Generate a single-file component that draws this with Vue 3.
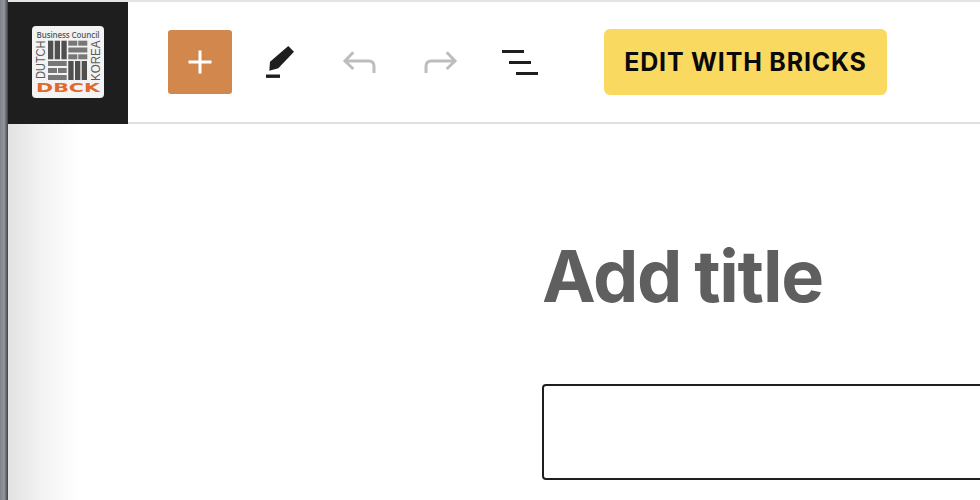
<template>
  <div class="page">
    <div class="edge"></div>
    <div class="main">
      <header class="toolbar">
        <a class="site-logo">
          <svg class="logo-img" viewBox="0 0 72 72" width="72" height="72">
            <rect width="72" height="72" rx="4" fill="#f3f3f3" />
            <text x="4.5" y="12.300" class="l-top" textLength="63" lengthAdjust="spacing">Business Council</text>
            <text transform="translate(13 53) rotate(-90)" class="l-side" textLength="38.500" lengthAdjust="spacingAndGlyphs">DUTCH</text>
            <text transform="translate(68 55) rotate(-90)" class="l-side" textLength="40.500" lengthAdjust="spacingAndGlyphs">KOREA</text>
            <rect
              v-for="b in bars"
              :key="b.x + '-' + b.y"
              :x="b.x"
              :y="b.y"
              :width="b.w"
              :height="b.h"
              :fill="b.fill"
            />
            <text x="4" y="65.800" class="l-name" textLength="64" lengthAdjust="spacingAndGlyphs">DBCK</text>
          </svg>
        </a>
        <div class="tools">
          <button class="add-btn">
            <svg width="24" height="24" viewBox="0 0 24 24"><path d="M12 0.500v23M0.500 12h23" stroke="#fff" stroke-width="3" fill="none" /></svg>
          </button>
          <button class="icon-btn">
            <svg width="36" height="36" viewBox="0 0 36 36">
              <path d="M26.300 2 32 7.700 16.300 24.300 7.300 26.700 8 17.700Z" fill="#1e1e1e" />
              <path d="M4 32.200h14" stroke="#1e1e1e" stroke-width="3.400" />
            </svg>
          </button>
          <button class="icon-btn">
            <svg width="36" height="36" viewBox="0 0 36 36" fill="none" stroke="#bdbdbd" stroke-width="3">
              <path d="M32 29v-7c0-3-2-5-5-5H4" />
              <path d="M11.300 8.300 3 17l8.300 8" />
            </svg>
          </button>
          <button class="icon-btn">
            <svg width="36" height="36" viewBox="0 0 36 36" fill="none" stroke="#bdbdbd" stroke-width="3">
              <path d="M4 29v-7c0-3 2-5 5-5h23" />
              <path d="M24.700 8.300 33 17l-8.300 8" />
            </svg>
          </button>
          <button class="icon-btn">
            <svg width="36" height="36" viewBox="0 0 36 36" fill="#1e1e1e">
              <rect x="0" y="6" width="22" height="3" />
              <rect x="7" y="17" width="22" height="3" />
              <rect x="14" y="28" width="22" height="3" />
            </svg>
          </button>
          <button class="bricks-btn">EDIT WITH BRICKS</button>
        </div>
      </header>
      <div class="editor">
        <div class="canvas">
          <h1 class="post-title">Add title</h1>
          <div class="block"></div>
        </div>
      </div>
    </div>
  </div>
</template>

<script setup>
const dark = '#4f4f4f'
const mid = '#777777'

// the four brick squares of the logo
const bars = [
  { x: 16, y: 14.7, w: 5.300, h: 18.600, fill: dark },
  { x: 22.7, y: 14.7, w: 5.300, h: 18.600, fill: dark },
  { x: 29.4, y: 14.7, w: 5.300, h: 18.600, fill: dark },
  { x: 36.3, y: 14.7, w: 9, h: 5, fill: mid },
  { x: 46.3, y: 14.7, w: 9, h: 5, fill: mid },
  { x: 36.3, y: 21.5, w: 19, h: 5, fill: mid },
  { x: 36.3, y: 28.3, w: 9, h: 5, fill: mid },
  { x: 46.3, y: 28.3, w: 9, h: 5, fill: mid },
  { x: 16, y: 35, w: 18.700, h: 5, fill: mid },
  { x: 16, y: 42, w: 9, h: 5, fill: mid },
  { x: 26, y: 42, w: 8.700, h: 5, fill: mid },
  { x: 16, y: 49, w: 18.700, h: 5, fill: mid },
  { x: 36.3, y: 35, w: 5.300, h: 19, fill: dark },
  { x: 43, y: 35, w: 5.300, h: 19, fill: dark },
  { x: 49.700, y: 35, w: 5.300, h: 19, fill: dark }
]
</script>

<style>
html,
body {
  margin: 0;
  background: #fff;
  overflow: hidden;
}
</style>

<style scoped>
.page {
  display: flex;
  width: 980px;
  height: 500px;
  overflow: hidden;
  font-family: Inter, "Liberation Sans", sans-serif;
}

.edge {
  width: 8px;
  flex: none;
  background: linear-gradient(90deg, #7d8188 0, #93979e 4px, #55585d 7px, #3a3a3c 8px);
}

.main {
  flex: 1;
  display: flex;
  flex-direction: column;
  min-width: 0;
}

.toolbar {
  display: flex;
  height: 120px;
  flex: none;
  border-top: 2px solid #e4e4e4;
  border-bottom: 2px solid #e0e0e0;
  background: #fff;
}

.site-logo {
  width: 120px;
  height: 122px;
  flex: none;
  background: #1e1e1e;
  display: flex;
  align-items: center;
  justify-content: center;
  padding-bottom: 2px;
  box-sizing: border-box;
}

.logo-img {
  display: block;
}

.l-top {
  font-family: "Open Sans", sans-serif;
  font-size: 8px;
  font-weight: 600;
  fill: #5c5c5c;
}

.l-side {
  font-family: "Liberation Sans", sans-serif;
  font-size: 13.500px;
  fill: #5c5c5c;
}

.l-name {
  font-family: "DejaVu Sans", sans-serif;
  font-weight: 700;
  font-size: 12.500px;
  fill: #e0692d;
}

.tools {
  display: flex;
  align-items: center;
  padding-left: 40px;
}

button {
  font-family: inherit;
  border: 0;
  padding: 0;
  background: none;
  display: flex;
  align-items: center;
  justify-content: center;
}

.add-btn {
  width: 64px;
  height: 64px;
  border-radius: 3px;
  background: #d2884c;
  margin-right: 30px;
}

.icon-btn {
  width: 36px;
  height: 36px;
  margin-right: 44px;
}

.icon-btn:nth-child(5) {
  margin-right: 66px;
}

.bricks-btn {
  width: 283px;
  height: 66px;
  border-radius: 6px;
  background: #fad961;
  color: #0a0a0a;
  font-size: 25px;
  font-weight: 700;
  letter-spacing: 0.800px;
}

.editor {
  flex: 1;
  background: linear-gradient(90deg, #e2e2e2 0, #f3f3f3 34px, #fff 72px);
}

.canvas {
  margin-left: 534px;
  padding-top: 112px;
}

.post-title {
  margin: 0 0 68px;
  font-size: 72px;
  line-height: 80px;
  font-weight: 700;
  letter-spacing: -1.200px;
  word-spacing: -3px;
  color: #5f5f5f;
}

.block {
  height: 92px;
  margin-right: -4px;
  border: 2px solid #1e1e1e;
  border-radius: 4px;
}
</style>
